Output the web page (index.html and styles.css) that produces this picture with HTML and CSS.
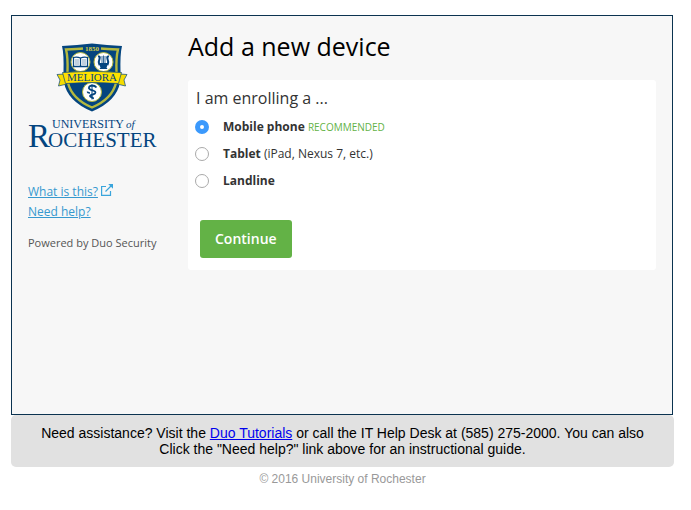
FILE: index.html
```html
<!DOCTYPE html>
<html lang="en">
<head>
    <meta charset="UTF-8">
    <meta name="viewport" content="width=device-width, initial-scale=1.0">
    <title>University of Rochester - Add a new device</title>
    <link rel="stylesheet" href="styles.css">
</head>
<body>
    <div class="frame">
        <!-- Logo and help links -->
        <aside class="sidebar">
            <svg class="logo" viewBox="28 43 130 108" role="img" aria-label="University of Rochester">
                <!-- shield -->
                <path fill="#04457f" d="M62 46 Q77 45 92 43.500 Q107 45 122 46 Q120 54 120.500 72 L120 82 Q117 101 92 111.500 Q67 101 64 82 L63.500 72 Q64 54 62 46z"/>
                <path fill="none" stroke="#b5b93f" stroke-width="2.400" d="M83 48.500 Q78 49 66 49.500 Q68 57 67.500 72 L68 83 Q72 99 92 107.500 Q112 99 116 83 L116.500 72 Q116 57 118 49.500 Q106 49 101 48.500"/>
                <text class="logo-year" x="92" y="51">1850</text>
                <circle cx="80.500" cy="62" r="9.500" fill="#fff" stroke="#b5b93f"/>
                <circle cx="103.500" cy="62" r="9.500" fill="#fff" stroke="#b5b93f"/>
                <circle cx="92" cy="92" r="9.500" fill="#fff" stroke="#b5b93f"/>
                <!-- book -->
                <path fill="#fff" stroke="#04457f" stroke-width="1.300" d="M80.500 58 Q77 56.500 73.500 57.500 V66.500 H87.500 V57.500 Q84 56.500 80.500 58z M80.500 58 V66"/>
                <path stroke="#04457f" stroke-width=".5" d="M75 60h4M75 62h4M75 64h4M82 60h4M82 62h4M82 64h4"/>
                <!-- lyre -->
                <path fill="none" stroke="#04457f" stroke-width="2" d="M98 56.500 Q100.500 56 99.500 59 Q98 62 99.500 65 M109 56.500 Q106.500 56 107.500 59 Q109 62 107.500 65"/>
                <path stroke="#04457f" stroke-width=".8" d="M102 56v8M103.500 55.500v8M105 56v8"/>
                <path fill="#04457f" d="M98.500 63h10l-2 4.500 1 1.500h-8l1-1.500z"/>
                <!-- staff and serpent -->
                <path stroke="#04457f" stroke-width="1" d="M92 84.500v15"/>
                <path fill="none" stroke="#04457f" stroke-width="1.800" d="M96.500 87.500 Q95 85.500 92 85.500 Q88.500 86 89 88.500 Q90 90 93 90.500 Q96.500 91.500 95 93.500 Q93.500 94.500 91 95 Q89 96 91 97 Q93.500 97.500 93 99"/>
                <path fill="none" stroke="#04457f" stroke-width="1.500" d="M87.500 91.500 Q87.500 93 90 93"/>
                <!-- ribbon -->
                <path fill="#f5dc00" stroke="#04457f" stroke-width=".7" d="M64 74 L57 74.500 L60 80 L58.500 86 L67 84z M120 74 L127 74.500 L124 80 L125.500 86 L117 84z"/>
                <path fill="#ffe100" stroke="#04457f" stroke-width=".7" d="M62.500 72.500 Q92 70 121.500 72.500 L118.500 83.500 Q92 81.500 65.500 83.500z"/>
                <text class="logo-motto" x="92" y="81">MELIORA</text>
                <!-- wordmark -->
                <text class="logo-top" x="52" y="128">UNIVERSITY</text>
                <text class="logo-of" x="126" y="128">of</text>
                <text class="logo-initial" x="28" y="147">R</text>
                <text class="logo-name" x="48" y="147">OCHESTER</text>
            </svg>

            <ul class="help-links">
                <li>
                    <a href="#what">What is this?</a>
                    <svg class="external" viewBox="0 0 12 12" aria-hidden="true">
                        <path d="M5 2.500H.600V11.400H9.500V7M4.500 7.500 10.500 1.500"/>
                        <path class="external-head" d="M7.200 0H12V4.800z"/>
                    </svg>
                </li>
                <li><a href="#help">Need help?</a></li>
            </ul>
            <p class="powered">Powered by Duo Security</p>
        </aside>

        <!-- Enrollment form -->
        <main class="content">
            <h1>Add a new device</h1>
            <form class="enroll">
                <fieldset>
                    <legend>I am enrolling a ...</legend>
                    <div class="option">
                        <input type="radio" id="mobile" name="device" value="mobile" checked>
                        <label for="mobile"><strong>Mobile phone</strong> <span class="recommended">RECOMMENDED</span></label>
                    </div>
                    <div class="option">
                        <input type="radio" id="tablet" name="device" value="tablet">
                        <label for="tablet"><strong>Tablet</strong> (iPad, Nexus 7, etc.)</label>
                    </div>
                    <div class="option">
                        <input type="radio" id="landline" name="device" value="landline">
                        <label for="landline"><strong>Landline</strong></label>
                    </div>
                </fieldset>
                <button type="button" class="button">Continue</button>
            </form>
        </main>
    </div>

    <div class="assistance">
        Need assistance? Visit the <a href="#tutorials">Duo Tutorials</a> or call the IT Help Desk at (585) 275-2000. You can also Click the "Need help?" link above for an instructional guide.
    </div>
    <footer class="copyright">&copy; 2016 University of Rochester</footer>
</body>
</html>
```
FILE: styles.css
```css
body {
    margin: 15px 17px 15px 11px;
    background: #fff;
    color: #000;
    font-family: "Liberation Sans", Arial, sans-serif;
    font-size: 14px;
}
.frame {
    display: flex;
    box-sizing: border-box;
    min-height: 400px;
    margin-right: 1px;
    padding: 12px 16px;
    border: 1px solid #0b3350;
    background: #f7f7f7;
    font-family: "Open Sans", sans-serif;
    font-size: 12px;
}
.sidebar {
    flex: 0 0 160px;
    padding-top: 15px;
    color: #555;
}
.logo {
    display: block;
    width: 130px;
    height: 108px;
    overflow: visible;
}
.logo text {
    fill: #04457f;
    font-family: "Liberation Serif", serif;
}
.logo .logo-year {
    fill: #d5cf45;
    font-size: 7px;
    font-weight: bold;
    text-anchor: middle;
}
.logo .logo-motto {
    font-size: 11px;
    text-anchor: middle;
}
.logo .logo-top {
    font-size: 12px;
}
.logo .logo-of {
    font-size: 11px;
    font-style: italic;
}
.logo .logo-initial {
    font-size: 33px;
}
.logo .logo-name {
    font-size: 21px;
}
.help-links {
    margin: 31px 0 0;
    padding: 0;
    list-style: none;
    line-height: 20px;
}
.help-links a {
    color: #3699cf;
}
.external {
    width: 12px;
    height: 12px;
    fill: none;
    stroke: #3aa5dc;
    stroke-width: 1.2;
}
.external-head {
    fill: #3aa5dc;
    stroke: none;
}
.powered {
    margin: 11px 0 0;
    font-size: 11px;
    line-height: 20px;
}
.content {
    flex: 1;
    min-width: 0;
}
h1 {
    margin: 0 0 16px;
    font-size: 25px;
    font-weight: normal;
    line-height: 36px;
}
.enroll {
    padding: 8px 8px 12px;
    border-radius: 3px;
    background: #fff;
    color: #333;
}
fieldset {
    margin: 0;
    padding: 0;
    border: 0;
}
legend {
    padding: 0;
    font-size: 16px;
    line-height: 20px;
    margin-bottom: 5px;
}
.option {
    display: flex;
    align-items: center;
    gap: 14px;
    height: 27px;
}
.option input {
    appearance: none;
    flex: none;
    box-sizing: border-box;
    width: 14px;
    height: 14px;
    margin: 0 0 0 -1px;
    border: 1px solid #aaa;
    border-radius: 50%;
    background: #fff;
}
.option input:checked {
    border: 5px solid #3b99fc;
}
.recommended {
    color: #63b246;
    font-size: 10px;
}
.button {
    margin: 26px 0 0 4px;
    padding: 9px 15px;
    border: 0;
    border-radius: 3px;
    background: #63b246;
    color: #fff;
    font-family: inherit;
    font-size: 14px;
    font-weight: 600;
    line-height: 20px;
}
.button:hover {
    background: #549e39;
}
.assistance {
    padding: 10px 26px;
    border-radius: 5px;
    background: #e1e1e1;
    line-height: 16px;
    text-align: center;
}
.assistance a {
    color: #0000ee;
}
.copyright {
    margin-top: 4px;
    color: #999;
    font-size: 12px;
    line-height: 16px;
    text-align: center;
}
```
